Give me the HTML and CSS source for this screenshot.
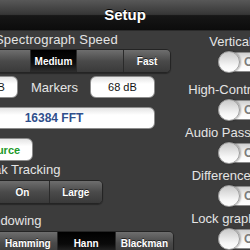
FILE: index.html
```html
<!DOCTYPE html>
<html lang="en">
<head>
    <meta charset="UTF-8">
    <meta name="viewport" content="width=device-width, initial-scale=1.0">
    <title>Setup</title>
    <link rel="stylesheet" href="styles.css">
</head>
<body>

<div class="navbar">
  <h1>Setup</h1>
</div>

<div class="setup">

  <div class="left">
    <div class="label label-speed">Spectrograph Speed</div>
    <div class="segmented seg-speed">
      <div class="seg"></div>
      <div class="seg"></div>
      <div class="seg selected">Medium</div>
      <div class="seg"></div>
      <div class="seg">Fast</div>
    </div>

    <div class="markers-row">
      <div class="field">-120 dB</div>
      <span class="markers">Markers</span>
      <div class="field">68 dB</div>
    </div>

    <div class="field field-fft">16384 FFT</div>

    <div class="source">Source</div>

    <div class="label">Peak Tracking</div>
    <div class="segmented seg-peak">
      <div class="seg">Off</div>
      <div class="seg">On</div>
      <div class="seg">Large</div>
    </div>

    <div class="label label-window">Windowing</div>
    <div class="segmented seg-window">
      <div class="seg">Rect</div>
      <div class="seg">Hamming</div>
      <div class="seg selected">Hann</div>
      <div class="seg">Blackman</div>
    </div>
  </div>

  <div class="right">
    <div class="option">
      <div class="option-label">Vertical Gridlines</div>
      <div class="toggle"><span class="knob"></span><span class="off">OFF</span></div>
    </div>
    <div class="option">
      <div class="option-label">High-Contrast Spectrum</div>
      <div class="toggle"><span class="knob"></span><span class="off">OFF</span></div>
    </div>
    <div class="option">
      <div class="option-label">Audio Passthrough Mode</div>
      <div class="toggle"><span class="knob"></span><span class="off">OFF</span></div>
    </div>
    <div class="option">
      <div class="option-label">Difference Comparison</div>
      <div class="toggle"><span class="knob"></span><span class="off">OFF</span></div>
    </div>
    <div class="option">
      <div class="option-label">Lock graph horizontally</div>
      <div class="toggle"><span class="knob"></span><span class="off">OFF</span></div>
    </div>
  </div>

</div>

</body>
</html>
```

FILE: styles.css
```css
body{
  margin:0;
  width:250px;
  height:250px;
  overflow:hidden;
  background-color:#3c3c3c;
  font-family:"Liberation Sans", Arial, sans-serif;
  color:#e4e4e4;
}

/* top bar */
.navbar{
  height:31px;
  background:linear-gradient(#585858 0%, #363636 48%, #161616 52%, #0c0c0c 100%);
  border-bottom:1px solid #2a2a2a;
  box-sizing:border-box;
  text-align:center;
}
.navbar h1{
  margin:0;
  font-size:15px;
  line-height:30px;
  font-weight:bold;
  color:white;
  text-shadow:0 -1px 0 #000;
}

.setup{
  display:flex;
}

/* left column */
.left{
  flex-shrink:0;
  width:235px;
  margin-left:-64px;
}
.label{
  font-size:13px;
  line-height:15px;
  padding-left:42px;
  margin-top:1px;
}
.label-speed{
  padding-left:59px;
  letter-spacing:0.2px;
}
.label-window{
  margin-top:9px;
}

.segmented{
  display:flex;
  height:22px;
  margin-top:3px;
  border:1px solid #242424;
  border-radius:5px;
  overflow:hidden;
  box-shadow:0 1px 1px rgba(0,0,0,0.35);
}
.seg{
  flex:1;
  display:flex;
  align-items:center;
  justify-content:center;
  background:linear-gradient(#6e6e6e, #4a4a4a 50%, #3a3a3a);
  border-left:1px solid #2a2a2a;
  color:white;
  font-size:10px;
  font-weight:bold;
  text-shadow:0 -1px 0 rgba(0,0,0,0.6);
}
.seg:first-child{
  border-left:none;
}
.seg.selected{
  background:linear-gradient(#000, #0a0a0a 55%, #2e2e2e);
}
.seg-speed{
  margin-top:2px;
}
.seg-peak{
  width:159px;
  margin-left:6px;
}
.seg-window{
  width:232px;
  margin-left:4px;
}

.field{
  height:22px;
  box-sizing:border-box;
  display:flex;
  align-items:center;
  justify-content:center;
  background:linear-gradient(#e4e4e4, #fff 35%);
  border:1px solid #8c8c8c;
  border-radius:6px;
  color:#111;
  font-size:11px;
}
.markers-row{
  display:flex;
  align-items:center;
  gap:12px;
  margin-top:3px;
  padding-left:17px;
}
.markers-row .field{
  width:65px;
}
.markers{
  font-size:13px;
  margin-left:1px;
}
.field-fft{
  width:202px;
  margin-left:17px;
  margin-top:9px;
  color:#2f4f8c;
  font-size:12px;
  font-weight:bold;
}
.source{
  width:63px;
  height:23px;
  box-sizing:border-box;
  margin-left:34px;
  margin-top:9px;
  display:flex;
  align-items:center;
  justify-content:center;
  background:linear-gradient(#e4e4e4, #fff 35%);
  border:1px solid #8c8c8c;
  border-radius:6px;
  color:#22992a;
  font-size:11px;
  font-weight:bold;
}

/* right column */
.right{
  flex-shrink:0;
  width:166px;
  margin-left:4px;
  padding-top:3px;
}
.option{
  height:43px;
  display:flex;
  flex-direction:column;
  align-items:center;
}
.option:first-child{
  height:48px;
}
.option-label{
  font-size:13px;
  line-height:15px;
  white-space:nowrap;
}
.toggle{
  margin-top:3px;
  width:80px;
  height:20px;
  box-sizing:border-box;
  display:flex;
  align-items:center;
  background:linear-gradient(#cfcfcf, #f4f4f4 45%, #fff);
  border:1px solid #8a8a8a;
  border-radius:11px;
}
.knob{
  width:22px;
  height:22px;
  box-sizing:border-box;
  margin-left:-1px;
  border-radius:50%;
  background:linear-gradient(#c9c9c9, #f7f7f7 70%, #fff);
  border:1px solid #9a9a9a;
  box-shadow:1px 0 2px rgba(0,0,0,0.3);
}
.off{
  margin-left:4px;
  font-size:12px;
  font-weight:bold;
  color:#7c7c7c;
}
```
